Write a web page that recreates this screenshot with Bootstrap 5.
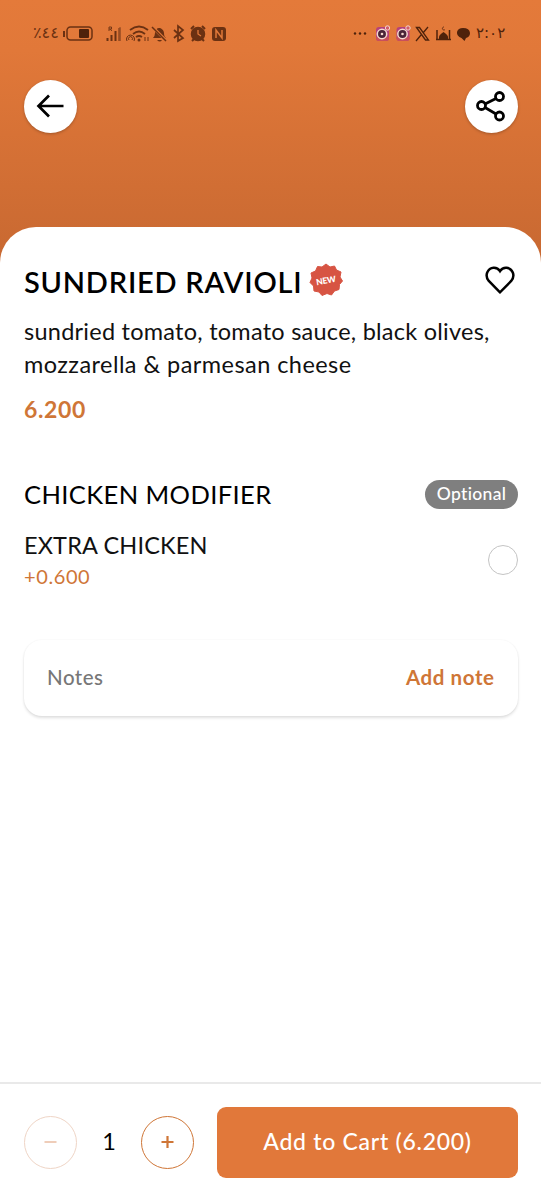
<!DOCTYPE html>
<html lang="en">
<head>
<meta charset="utf-8">
<meta name="viewport" content="width=device-width, initial-scale=1">
<title>Sundried Ravioli</title>
<link href="https://cdn.jsdelivr.net/npm/bootstrap@5.3.0/dist/css/bootstrap.min.css" rel="stylesheet">
<style>
:root{--brand:#e1783a;--brand-text:#cf7637}
body{font-family:Lato,"Open Sans",sans-serif;color:#000;background:#fff}
.hero{height:270px;background:linear-gradient(#e47a3a 0,#e17839 50px,#c76831 270px)}
.status{height:67px;padding:0 35px 2px 33px;color:#6b3112}
.status-text{font:14px/20px "DejaVu Sans",sans-serif;unicode-bidi:bidi-override;direction:ltr;white-space:nowrap}
.battery{width:27px;font-size:16px}
.clock{width:30px;font-size:15px;color:#4f220b}
.hero-actions{padding-top:13px}
.round-btn{width:53px;height:53px;background:#fff;border:0;box-shadow:0 1px 3px rgba(0,0,0,.25)}
.px-page{padding-left:24px;padding-right:23px}
.sheet{margin-top:-43px;border-radius:36px 36px 0 0;padding-top:36px}
.t{white-space:nowrap}
.dish{width:285px;font-size:29px;line-height:38px;font-weight:600;letter-spacing:.78px}
.new-mark,.heart{margin-top:-4px}
.desc{font-size:23.5px;line-height:33px;margin-top:14px;letter-spacing:.25px;color:#111}
.desc span+br+span{letter-spacing:.44px}
.price{font-size:23px;line-height:30px;margin-top:13px;font-weight:700;color:var(--brand-text);letter-spacing:.65px}
.group-row{margin-top:53px}
.group{font-size:25.5px;line-height:34px;letter-spacing:.4px}
.pill{width:93px;height:29px;font-size:17.5px;font-weight:500;background:#7f7f7f;border-radius:15px;color:#fff;letter-spacing:.35px;margin-top:1px}
.option-row{margin-top:18px}
.option{font-size:23.5px;line-height:32px;letter-spacing:.15px;color:#111}
.extra{font-size:20px;line-height:30px;color:var(--brand-text);letter-spacing:.6px}
.radio{width:30px;height:30px;border:1.5px solid #c4c4c4}
.note-box{height:76px;border-radius:18px;margin-top:49px;padding:0 24px 1px 23px;box-shadow:0 2px 3px rgba(0,0,0,.12),0 0 2px rgba(0,0,0,.06);font-size:20.5px;color:#777;font-weight:500;letter-spacing:.5px}
.add{font-weight:700;color:var(--brand-text);letter-spacing:.6px;margin-right:-.6px}
.bar{height:118px;border-top:2px solid #e9e9e9}
.step{width:53px;height:53px;border:1.5px solid var(--brand-text);background:#fff}
.step.off{border-color:#efd5c6}
.qty{width:64px;font-size:23.5px}
.cart{width:301px;height:71px;background:var(--brand);border-radius:9px;color:#fff;font-size:23px;border:0;font-weight:500;letter-spacing:.72px}
.cart{padding:0 0 2px}
</style>
</head>
<body class="vh-100 d-flex flex-column overflow-hidden">
<header class="hero flex-shrink-0">
  <div class="status d-flex align-items-center justify-content-between">
    <div class="d-flex align-items-center">
      <span class="status-text battery">٪٤٤</span>
      <svg width="172" height="24" viewBox="61 21 172 24" fill="none" stroke="#6b3112" stroke-width="1.5">
        <path d="M65 31v6" stroke-width="2"/><rect x="68" y="27" width="25" height="13" rx="3.5"/><rect x="80" y="29" width="10" height="9" rx="1" fill="#4f220b" stroke="none"/>
        <path d="M108.500 38v3M112.500 35v6M116.500 31v10M120.500 28v13" stroke-width="2"/><path d="M121 27v14" stroke="#a95628"/>
        <path d="M110 31v-4h2.500v2H110m1.300 0 1.500 2" stroke-width=".9"/>
        <path d="M131 30q9-7 18 0M134 34q6-5 12 0M137 37q3-2 6 0" stroke-width="1.800"/><circle cx="140" cy="40" r="1.500" fill="#6b3112" stroke="none"/><path d="M128 41a4 4 0 1 1 7 0M130 40a2 2 0 1 1 3 0M146 37v4m3-4v4" stroke-width="1"/>
        <path d="M154 38q2-2 2-5c0-3 2-5 4-5s5 2 5 5q0 4 2 5zM158 40h5q-2 3-5 0" fill="#6b3112" stroke="none"/><path d="m153.500 27 14 14" stroke="#e17839" stroke-width="3"/><path d="m153 27 14 14"/>
        <path d="m175 30 9 8-5 3V26l5 4-9 8" stroke-width="1.700"/>
        <circle cx="199" cy="34" r="6.500" fill="#6b3112"/><path d="m192 29 3-3m11 3-3-3m-8 13-2 2m10-2 2 2" stroke-width="2"/><path d="M199 30v4l3 2" stroke="#e17839" stroke-width="1.300"/>
        <rect x="213" y="27" width="14" height="14" rx="3" fill="#6b3112" stroke="none"/><path d="M217 38v-8l6 8v-8" stroke="#e17839" stroke-width="1.500"/>
      </svg>
    </div>
    <div class="d-flex align-items-center">
      <svg width="124" height="24" viewBox="352 21 124 24" fill="none" stroke="#4f220b">
        <g fill="#4f220b" stroke="none"><circle cx="355" cy="33.500" r="1.200"/><circle cx="360" cy="33.500" r="1.200"/><circle cx="365" cy="33.500" r="1.200"/></g>
        <g id="cam"><rect x="376" y="27" width="13" height="14" rx="3" fill="#b6427a" stroke="none"/><path d="M376 37h13v1q0 3-3 3h-7q-3 0-3-3z" fill="#c94f5c" stroke="none"/><circle cx="382" cy="34" r="4.700" fill="#4a2438" stroke="#f5d9d0" stroke-width="1.500"/><circle cx="382" cy="34" r="1.300" fill="#f5d9d0" stroke="none"/><circle cx="387.500" cy="28" r="2.200" fill="#d45d68" stroke="#f5d9d0"/></g>
        <use href="#cam" x="20.500"/>
        <path d="m416.500 27.500 9 12.500h3l-9-12.500zM428 27l-5 6m-2 2-5 6" stroke-width="1.300"/>
        <path d="M437 40V30M449.500 30v10M436 39.500h15" stroke-width="1.500"/><path d="M439 39v-2q0-2 4.500-5 4.500 3 4.500 5v2z" fill="#4f220b" stroke="none"/><path d="M444 27a1.500 1.500 0 1 0 1 2.500" stroke-width=".8"/>
        <path d="M457 32q1-4 6-4 6.500 0 7 5 0 4-4 5l-1.500 3-3-3q-5-2-4.500-6" fill="#4f220b" stroke="none"/>
      </svg>
      <span class="status-text clock">٢:٠٢</span>
    </div>
  </div>
  <div class="hero-actions px-page d-flex justify-content-between">
    <button class="round-btn rounded-circle p-0" aria-label="Back"><svg class="d-block" width="53" height="53" viewBox="0 0 53 53" fill="none" stroke="#000" stroke-width="2.700"><path d="M39.500 26H14M25 15.500 14.500 26 25 36.500"/></svg></button>
    <button class="round-btn rounded-circle p-0" aria-label="Share"><svg class="d-block" width="53" height="53" viewBox="0 0 53 53" fill="none" stroke="#000" stroke-width="2.800"><circle cx="16.500" cy="25.500" r="4"/><circle cx="34.500" cy="16.500" r="4"/><circle cx="34.500" cy="36" r="4"/><path d="m20 24 11-5.500M20 27.500l11 6.500"/></svg></button>
  </div>
</header>
<main class="sheet px-page bg-white flex-grow-1">
  <div class="d-flex align-items-center">
    <h1 class="dish t m-0">SUNDRIED RAVIOLI</h1>
    <svg class="new-mark" width="34" height="34" viewBox="-17 -17 34 34"><path fill="#d75443" stroke="#d75443" stroke-linejoin="round" d="M0-16 4-13 8.500-14 10.500-10 15-8 14-3 16.500 1 13.500 4.500 13 9.500 8.500 11 5.500 15 1 13.500-4 15.500-7 12-12 11-12.500 6-16 2.500-14-2-15-7-10.500-9-8.500-13.500-4-13z"/><text transform="rotate(-10)" y="3.500" text-anchor="middle" textLength="20" font-family="Lato" font-size="8.500" font-weight="900" fill="#fff">NEW</text></svg>
    <svg class="heart ms-auto" width="36" height="34" viewBox="0 0 36 34" fill="none" stroke="#000" stroke-width="2.500"><path d="M18 29.300 6.800 18Q3.500 14 5.200 9.500C8 3.500 15 3.500 18 8.200 21 3.500 28 3.500 30.800 9.500Q32.500 14 29.200 18z"/></svg>
  </div>
  <div class="desc t"><span>sundried tomato, tomato sauce, black olives,</span><br><span>mozzarella &amp; parmesan cheese</span></div>
  <div class="price t">6.200</div>
  <div class="group-row d-flex justify-content-between align-items-center">
    <h2 class="group t m-0 fw-normal">CHICKEN MODIFIER</h2>
    <span class="pill d-flex align-items-center justify-content-center">Optional</span>
  </div>
  <div class="option-row d-flex justify-content-between align-items-center">
    <div><div class="option t">EXTRA CHICKEN</div><div class="extra t">+0.600</div></div>
    <span class="radio rounded-circle"></span>
  </div>
  <div class="note-box d-flex align-items-center justify-content-between"><span>Notes</span><span class="add">Add note</span></div>
</main>
<footer class="bar px-page d-flex align-items-center flex-shrink-0">
  <button class="step off rounded-circle p-0" aria-label="Decrease"><svg class="d-block m-auto" width="20" height="20" stroke="#efcdb9" stroke-width="2"><path d="M3.500 10h12"/></svg></button>
  <span class="qty text-center">1</span>
  <button class="step rounded-circle p-0" aria-label="Increase"><svg class="d-block m-auto" width="20" height="20" stroke="#cf7637" stroke-width="2.200"><path d="M3.500 10h12M9.500 4v12"/></svg></button>
  <button class="cart ms-auto">Add to Cart (6.200)</button>
</footer>
<script src="https://cdn.jsdelivr.net/npm/bootstrap@5.3.0/dist/js/bootstrap.bundle.min.js"></script>
</body>
</html>
